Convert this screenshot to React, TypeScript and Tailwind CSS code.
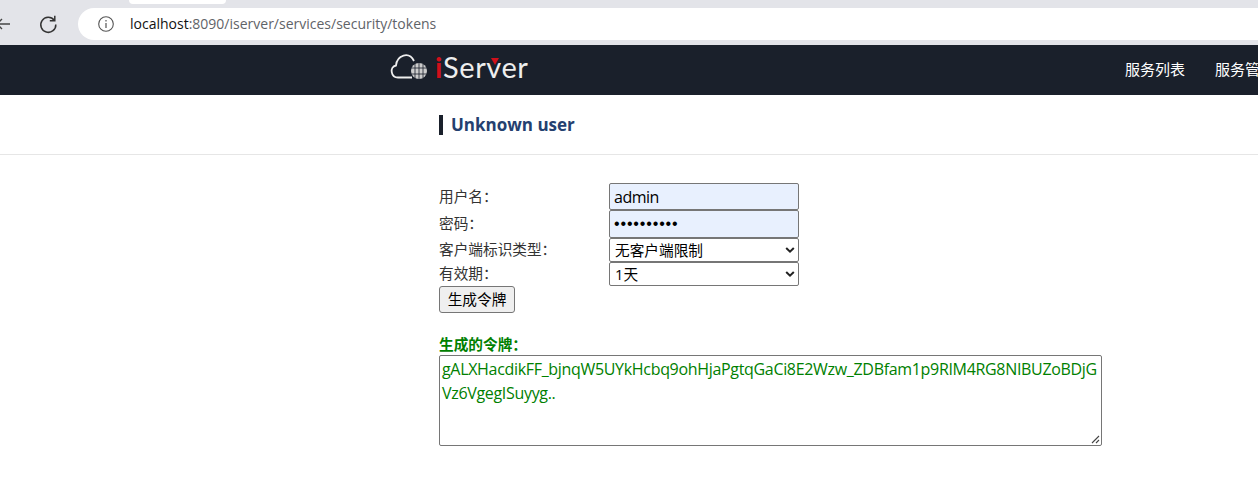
const sans = "font-['Open_Sans','Noto_Sans_CJK_SC',sans-serif]";

function Field({ label, children }: { label: string; children: React.ReactNode }) {
  return (
    <div className="flex items-center">
      <label className="w-[170px] -translate-y-[1px] text-[14.67px] leading-[18px] text-[#333]">{label}</label>
      {children}
    </div>
  );
}

function Select({ value, h }: { value: string; h: string }) {
  return (
    <div className={`relative flex w-[190px] items-center rounded-[2px] border border-[#767676] bg-white pl-[5px] text-[14.67px] text-black ${h}`}>
      {value}
      <svg className="absolute right-[3px] top-1/2 -translate-y-1/2" width="10" height="7" viewBox="0 0 10 7">
        <path d="M1.2 1.5 L5 5.2 L8.800 1.5" fill="none" stroke="#222" strokeWidth="2" />
      </svg>
    </div>
  );
}

export default function App() {
  return (
    <div className={`h-[494px] w-[1258px] overflow-hidden bg-white ${sans}`}>
      <div className="h-[8px] bg-[#e3e4e9]">
        <div className="ml-[129px] h-[4px] w-[97px] rounded-b-[8px] bg-white" />
      </div>
      <div className="flex h-[37px] items-start bg-[#e3e4e9] pb-[4px]">
        <svg className="mt-[8px] shrink-0" width="10" height="16" viewBox="0 0 10 16">
          <path d="M-1 8 H10 M2 3 L-3 8 L2 13" fill="none" stroke="#444" strokeWidth="1.4" />
        </svg>
        <svg className="ml-[28px] mt-[6px] shrink-0" width="20" height="20" viewBox="0 0 20 20">
          <path d="M16.200 6.200 A7.500 7.500 0 1 0 17.800 10.500" fill="none" stroke="#333" strokeWidth="1.500" />
          <path d="M16.800 1.800 V6.800 H11.800" fill="none" stroke="#333" strokeWidth="1.500" />
        </svg>
        <div className="ml-[20px] flex h-[32px] flex-1 items-center rounded-l-[16px] bg-white">
          <svg className="ml-[19px] shrink-0" width="18" height="18" viewBox="0 0 18 18">
            <circle cx="9" cy="9" r="7.300" fill="none" stroke="#555" strokeWidth="1.100" />
            <path d="M9 8 V13 M9 5 V6.400" stroke="#555" strokeWidth="1.200" />
          </svg>
          <span className="ml-[15px] -translate-y-[1px] text-[14px] text-[#5f6368]">
            <span className="text-[#111]">localhost</span>:8090/iserver/services/security/tokens
          </span>
        </div>
      </div>
      <header className="flex h-[50px] items-center bg-[#1a202b] text-white">
        <div className="ml-[390px] flex w-[735px] shrink-0 -translate-y-[3px] items-center">
          <svg className="-translate-y-[1px]" width="38" height="28" viewBox="0 0 38 28">
            <path d="M22 25.500 H8 C1 25.500 -1 15 6 13.500 C7 3 19 -1 24 9" fill="none" stroke="#eee" strokeWidth="1.800" />
            <circle cx="29" cy="19" r="8" fill="#ccc" />
            <path d="M21 16 H37 M21 22 H37 M25 11 V27 M29 11 V27 M33 12 V26" stroke="#1a202b" strokeWidth=".8" />
          </svg>
          <span className="relative ml-[7px] flex font-['Lato',sans-serif] text-[29px] leading-[34px] tracking-[0.6px] text-[#eee]">
            <span className="font-bold text-[#d0101b]">i</span>Server
            <span className="absolute left-[56px] top-[8px] h-0 w-0 border-x-[4px] border-t-[7px] border-x-transparent border-t-[#d0101b]" />
          </span>
        </div>
        <nav className="flex shrink-0 -translate-y-[1px] gap-[30px] whitespace-nowrap text-[15px]">
          <span>服务列表</span>
          <span>服务管理</span>
        </nav>
      </header>
      <div className="flex h-[60px] items-center border-b border-[#e6e6e6] pl-[439px]">
        <h1 className="border-l-[4px] border-[#1a202b] pl-[8px] text-[17px] font-bold leading-[20px] text-[#24406f]">Unknown user</h1>
      </div>
      <form className="ml-[439px] mt-[28px] w-[663px]">
        <Field label="用户名：">
          <div className="flex h-[27px] w-[190px] items-center rounded-[2px] border border-[#767676] bg-[#e8f0fe] pl-[4px] text-[16px] tracking-[-0.5px] text-black">admin</div>
        </Field>
        <Field label="密码：">
          <div className="flex h-[28px] w-[190px] items-center rounded-[2px] border border-[#767676] bg-[#e8f0fe] pl-[4px] font-['Liberation_Sans',sans-serif] text-[16px] tracking-[0.85px] text-black">••••••••••</div>
        </Field>
        <Field label="客户端标识类型：">
          <Select value="无客户端限制" h="h-[24px]" />
        </Field>
        <Field label="有效期：">
          <Select value="1天" h="h-[24px]" />
        </Field>
        <button type="button" className="block h-[27px] w-[76px] rounded-[3px] border border-[#767676] bg-[#efefef] pb-[2px] text-[14.67px] text-black">生成令牌</button>
        <div className="mt-[22px] text-[14.67px] font-bold leading-[18px] text-[#008000]">生成的令牌：</div>
        <div className="relative mt-[2px] h-[91px] w-[663px] rounded-[2px] border border-[#767676] px-[2px] pt-[1px] text-[16px] leading-[24px] tracking-[-0.32px] text-[#008000] break-all">
          gALXHacdikFF_bjnqW5UYkHcbq9ohHjaPgtqGaCi8E2Wzw_ZDBfam1p9RIM4RG8NIBUZoBDjGVz6VgegISuyyg..
          <svg className="absolute bottom-[1px] right-[1px]" width="9" height="9" viewBox="0 0 9 9">
            <path d="M8 1 L1 8 M8 5 L5 8" stroke="#444" strokeWidth="1.100" />
          </svg>
        </div>
      </form>
    </div>
  );
}
